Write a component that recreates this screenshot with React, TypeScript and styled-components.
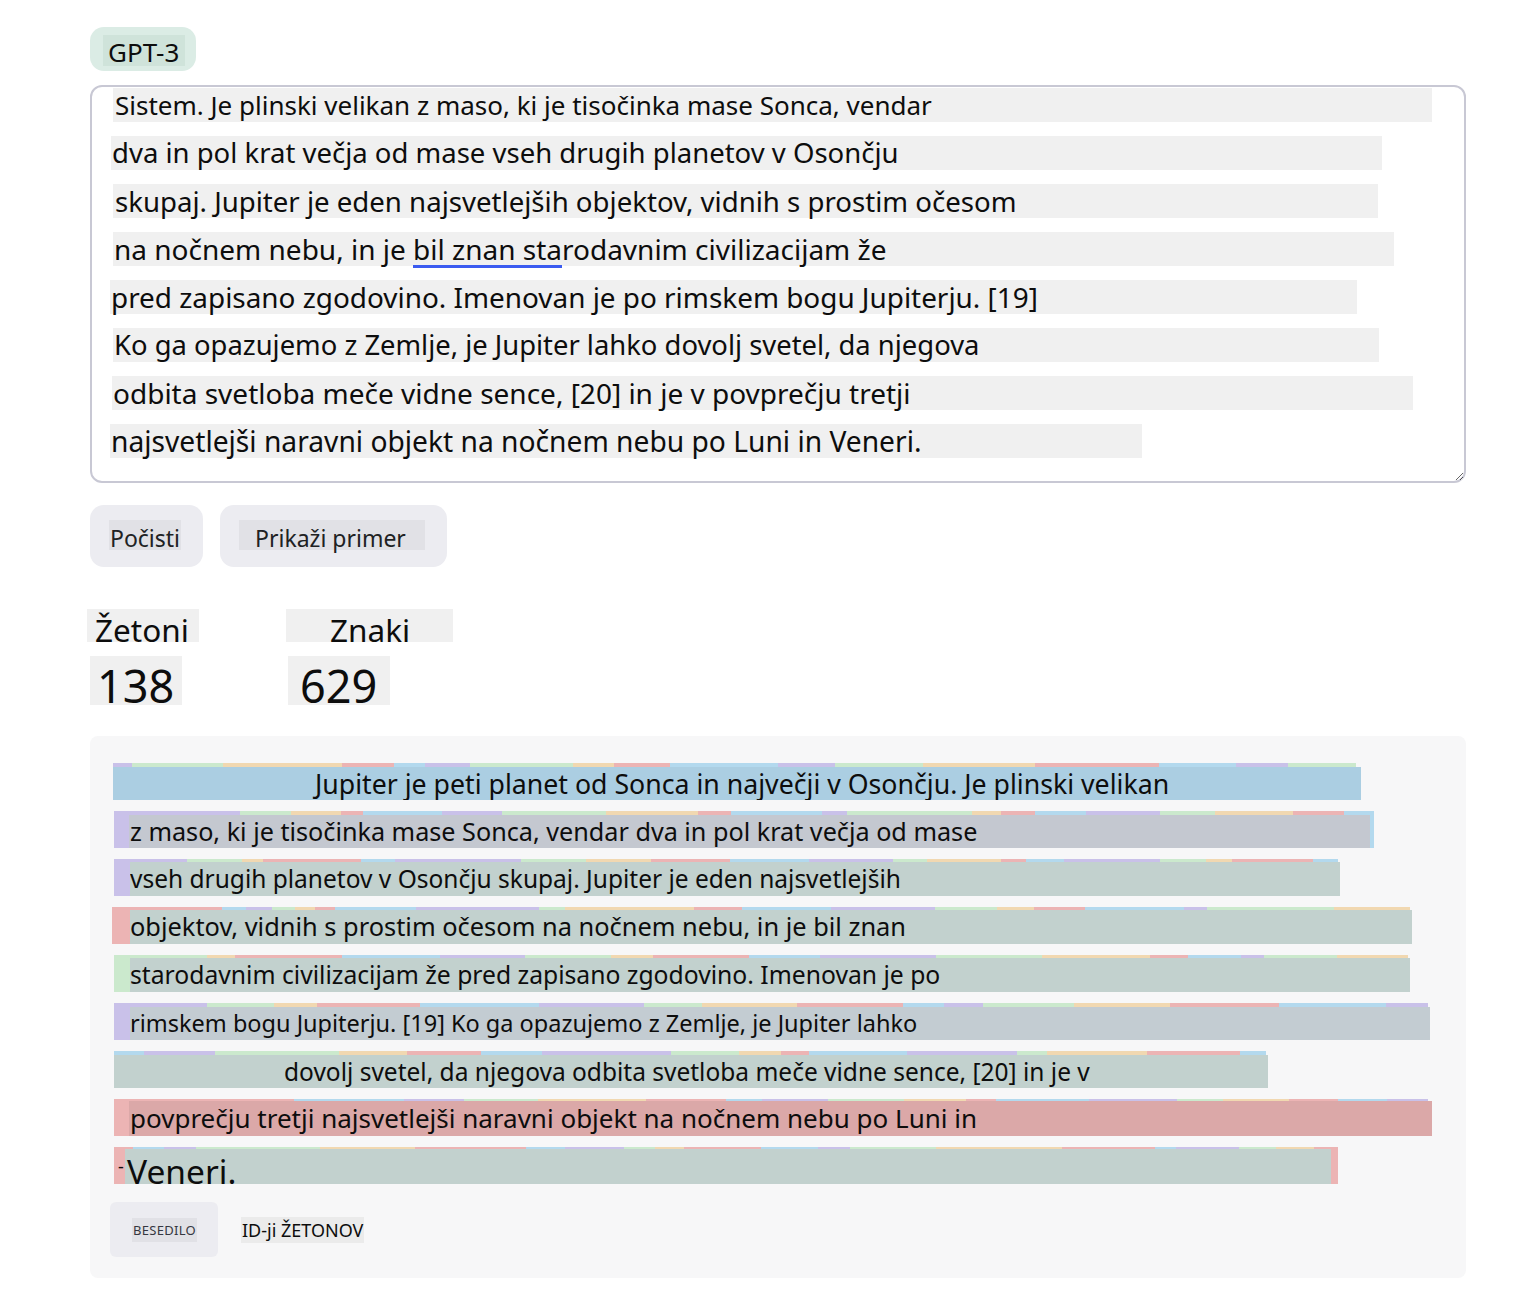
import React from "react";
import styled, { createGlobalStyle } from "styled-components";

const GlobalStyle = createGlobalStyle`
  html, body {
    margin: 0;
    padding: 0;
    background: #ffffff;
  }
  body {
    font-family: "Noto Sans", "Open Sans", sans-serif;
    color: #0d0d0d;
  }
`;

const TOKEN_COLORS = ["#c9c1e9", "#cbe9cd", "#f1d8b1", "#ecb4b4", "#b3d9ee"];

const Page = styled.div`
  width: 1376px;
  padding: 27px 0 14px 90px;
  display: flex;
  flex-direction: column;
`;

const ModelPill = styled.div`
  align-self: flex-start;
  background: #dbece5;
  border-radius: 14px;
  padding: 8px 11px 5px 13px;
`;

const PillLabel = styled.span`
  display: block;
  height: 31px;
  overflow: hidden;
  background: #cfe3da;
  font-size: 26px;
  line-height: 35px;
  padding: 0 6px 0 5px;
`;

const Editor = styled.div`
  margin-top: 14px;
  height: 398px;
  box-sizing: border-box;
  border: 2px solid #c8c8d4;
  border-radius: 12px;
  padding-top: 1px;
  overflow: auto;
  resize: both;
  display: flex;
  flex-direction: column;
  gap: 14px;
`;

const EditorLine = styled.div<{ $left: number; $width: number; $pad: number; $size: number }>`
  margin-left: ${(p) => p.$left}px;
  width: ${(p) => p.$width}px;
  height: 34px;
  flex-shrink: 0;
  box-sizing: border-box;
  padding-left: ${(p) => p.$pad}px;
  background: #f0f0f0;
  font-size: ${(p) => p.$size}px;
  line-height: 34px;
  white-space: nowrap;
`;

const Marked = styled.span`
  position: relative;
  &::after {
    content: "";
    position: absolute;
    left: 0;
    right: 0;
    bottom: 0;
    height: 3px;
    background: #3b5bf0;
  }
`;

const Actions = styled.div`
  margin-top: 22px;
  display: flex;
  gap: 17px;
`;

const ActionButton = styled.button`
  border: none;
  background: #ececf1;
  border-radius: 14px;
  padding: 15px 22px 17px 19px;
  font-family: inherit;
  color: #202123;
  cursor: pointer;
`;

const ButtonLabel = styled.span<{ $padLeft: number; $padRight: number }>`
  display: block;
  height: 30px;
  box-sizing: border-box;
  background: #e1e1e6;
  font-size: 23px;
  line-height: 24px;
  padding: 6px ${(p) => p.$padRight}px 0 ${(p) => p.$padLeft}px;
  white-space: nowrap;
`;

const Stats = styled.div`
  margin-top: 42px;
  margin-left: -3px;
  display: grid;
  grid-template-columns: 199px auto;
`;

const StatColumn = styled.div`
  display: flex;
  flex-direction: column;
  align-items: flex-start;
`;

const StatLabel = styled.div<{ $pad: string }>`
  height: 33px;
  overflow: hidden;
  background: #f0f0f0;
  font-size: 31.5px;
  line-height: 41px;
  padding: ${(p) => p.$pad};
`;

const StatValue = styled.div<{ $shift: number; $pad: string }>`
  margin-top: 14px;
  margin-left: ${(p) => p.$shift}px;
  height: 49px;
  overflow: hidden;
  background: #f0f0f0;
  font-size: 45px;
  line-height: 59px;
  padding: ${(p) => p.$pad};
`;

const Output = styled.div`
  margin-top: 31px;
  background: #f7f7f8;
  border-radius: 8px;
  padding: 27px 0 21px 23px;
`;

const TokenRows = styled.div`
  display: flex;
  flex-direction: column;
  gap: 11px;
`;

const TokenRow = styled.div<{ $start: number }>`
  position: relative;
  display: flex;
  height: 37px;
  margin-left: ${(p) => p.$start}px;
  align-self: flex-start;
`;

const Segment = styled.div<{ $color: string; $width: number }>`
  width: ${(p) => p.$width}px;
  flex-shrink: 0;
  background: ${(p) => p.$color};
  font-size: 18px;
  line-height: 38px;
  padding-left: 4px;
  box-sizing: border-box;
  overflow: hidden;
`;

const Overlay = styled.div<{ $left: number; $width: number; $lift: number; $fill: string }>`
  position: absolute;
  left: ${(p) => p.$left}px;
  top: ${(p) => p.$lift}px;
  bottom: 0;
  width: ${(p) => p.$width}px;
  background: ${(p) => p.$fill};
  overflow: hidden;
  white-space: nowrap;
`;

const OverlayText = styled.div<{ $indent: number; $size: number; $lh: number }>`
  padding-left: ${(p) => p.$indent}px;
  font-size: ${(p) => p.$size}px;
  line-height: ${(p) => p.$lh}px;
`;

const Tabs = styled.div`
  margin-top: 18px;
  margin-left: -3px;
  display: flex;
  align-items: center;
  gap: 23px;
`;

const TabButton = styled.div`
  width: 108px;
  height: 55px;
  box-sizing: border-box;
  padding: 16px 0 0 22px;
  background: #ececf1;
  border-radius: 6px;
`;

const TabLabel = styled.span`
  display: inline-block;
  background: #e1e1e6;
  font-size: 13px;
  line-height: 24px;
  letter-spacing: 0.3px;
  padding: 0 1px;
  color: #353740;
`;

const PlainTab = styled.span`
  background: #ebebeb;
  font-size: 18px;
  line-height: 26px;
  padding: 0 1px;
  color: #0d0d0d;
`;

const editorLines = [
  { left: 21, width: 1319, pad: 2, size: 26, text: "Sistem. Je plinski velikan z maso, ki je tisočinka mase Sonca, vendar" },
  { left: 19, width: 1271, pad: 1, size: 27.5, text: "dva in pol krat večja od mase vseh drugih planetov v Osončju" },
  { left: 21, width: 1265, pad: 2, size: 27.6, text: "skupaj. Jupiter je eden najsvetlejših objektov, vidnih s prostim očesom" },
  { left: 21, width: 1281, pad: 1, size: 28, text: "" },
  { left: 18, width: 1247, pad: 1, size: 27.9, text: "pred zapisano zgodovino. Imenovan je po rimskem bogu Jupiterju. [19]" },
  { left: 21, width: 1266, pad: 1, size: 27.4, text: "Ko ga opazujemo z Zemlje, je Jupiter lahko dovolj svetel, da njegova" },
  { left: 20, width: 1301, pad: 1, size: 28, text: "odbita svetloba meče vidne sence, [20] in je v povprečju tretji" },
  { left: 18, width: 1032, pad: 1, size: 28.2, text: "najsvetlejši naravni objekt na nočnem nebu po Luni in Veneri." },
];

interface RowSpec {
  start: number;
  total: number;
  first: number;
  color: number;
  seed: number;
  lift: number;
  boxLeft: number;
  boxWidth: number;
  fill: string;
  indent: number;
  size: number;
  lh: number;
  text: string;
  lead?: string;
}

const rows: RowSpec[] = [
  { start: 0, total: 1243, first: 19, color: 0, seed: 11, lift: 4, boxLeft: 0, boxWidth: 1248, fill: "#abcee2", indent: 202, size: 26.7, lh: 33,
    text: "Jupiter je peti planet od Sonca in največji v Osončju. Je plinski velikan" },
  { start: 1, total: 1260, first: 126, color: 0, seed: 27, lift: 4, boxLeft: 15, boxWidth: 1241, fill: "#c4c8d0", indent: 1, size: 25.2, lh: 33,
    text: "z maso, ki je tisočinka mase Sonca, vendar dva in pol krat večja od mase" },
  { start: 1, total: 1224, first: 73, color: 0, seed: 53, lift: 3, boxLeft: 16, boxWidth: 1210, fill: "#c2d1ce", indent: 0, size: 24.5, lh: 33,
    text: "vseh drugih planetov v Osončju skupaj. Jupiter je eden najsvetlejših" },
  { start: -1, total: 1298, first: 110, color: 3, seed: 71, lift: 3, boxLeft: 18, boxWidth: 1282, fill: "#c2d1ce", indent: 0, size: 25.4, lh: 33,
    text: "objektov, vidnih s prostim očesom na nočnem nebu, in je bil znan" },
  { start: 1, total: 1294, first: 93, color: 1, seed: 97, lift: 3, boxLeft: 16, boxWidth: 1280, fill: "#c2d1ce", indent: 0, size: 24.7, lh: 33,
    text: "starodavnim civilizacijam že pred zapisano zgodovino. Imenovan je po" },
  { start: 1, total: 1314, first: 93, color: 0, seed: 131, lift: 4, boxLeft: 16, boxWidth: 1300, fill: "#c3ccd2", indent: 0, size: 23.5, lh: 33,
    text: "rimskem bogu Jupiterju. [19] Ko ga opazujemo z Zemlje, je Jupiter lahko" },
  { start: 1, total: 1152, first: 30, color: 4, seed: 157, lift: 4, boxLeft: 0, boxWidth: 1154, fill: "#c2d1ce", indent: 170, size: 24.5, lh: 33,
    text: "dovolj svetel, da njegova odbita svetloba meče vidne sence, [20] in je v" },
  { start: 1, total: 1314, first: 180, color: 3, seed: 191, lift: 2, boxLeft: 15, boxWidth: 1303, fill: "#dba8a8", indent: 1, size: 26, lh: 34,
    text: "povprečju tretji najsvetlejši naravni objekt na nočnem nebu po Luni in" },
  { start: 1, total: 1224, first: 19, color: 3, seed: 223, lift: 2, boxLeft: 11, boxWidth: 1206, fill: "#c2d1ce", indent: 2, size: 33.5, lh: 44,
    text: "Veneri.", lead: "-" },
];

function segmentWidths(total: number, seed: number, first: number): number[] {
  const out = [first];
  let used = first;
  let s = seed;
  while (used < total) {
    s = (s * 9301 + 49297) % 233280;
    let w = 20 + Math.floor((s / 233280) * 110);
    if (total - used - w < 16) w = total - used;
    out.push(w);
    used += w;
  }
  return out;
}

const TokenLine = ({ row }: { row: RowSpec }) => {
  const widths = segmentWidths(row.total, row.seed, row.first);
  return (
    <TokenRow $start={row.start}>
      {widths.map((w, i) => (
        <Segment key={i} $width={w} $color={TOKEN_COLORS[(row.color + i) % TOKEN_COLORS.length]}>
          {i === 0 && row.lead ? row.lead : null}
        </Segment>
      ))}
      <Overlay $left={row.boxLeft} $width={row.boxWidth} $lift={row.lift} $fill={row.fill}>
        <OverlayText $indent={row.indent} $size={row.size} $lh={row.lh}>
          {row.text}
        </OverlayText>
      </Overlay>
    </TokenRow>
  );
};

export default function App() {
  return (
    <>
      <GlobalStyle />
      <Page>
        <ModelPill>
          <PillLabel>GPT-3</PillLabel>
        </ModelPill>

        <Editor>
          {editorLines.map((line, i) => (
            <EditorLine key={i} $left={line.left} $width={line.width} $pad={line.pad} $size={line.size}>
              {i === 3 ? (
                <>
                  na nočnem nebu, in je <Marked>bil znan sta</Marked>rodavnim civilizacijam že
                </>
              ) : (
                line.text
              )}
            </EditorLine>
          ))}
        </Editor>

        <Actions>
          <ActionButton>
            <ButtonLabel $padLeft={1} $padRight={1}>Počisti</ButtonLabel>
          </ActionButton>
          <ActionButton>
            <ButtonLabel $padLeft={16} $padRight={19}>Prikaži primer</ButtonLabel>
          </ActionButton>
        </Actions>

        <Stats>
          <StatColumn>
            <StatLabel $pad="0 10px 0 8px">Žetoni</StatLabel>
            <StatValue $shift={3} $pad="0 8px 0 7px">138</StatValue>
          </StatColumn>
          <StatColumn>
            <StatLabel $pad="0 43px 0 44px">Znaki</StatLabel>
            <StatValue $shift={2} $pad="0 13px 0 12px">629</StatValue>
          </StatColumn>
        </Stats>

        <Output>
          <TokenRows>
            {rows.map((row, i) => (
              <TokenLine key={i} row={row} />
            ))}
          </TokenRows>
          <Tabs>
            <TabButton>
              <TabLabel>BESEDILO</TabLabel>
            </TabButton>
            <PlainTab>ID-ji ŽETONOV</PlainTab>
          </Tabs>
        </Output>
      </Page>
    </>
  );
}
